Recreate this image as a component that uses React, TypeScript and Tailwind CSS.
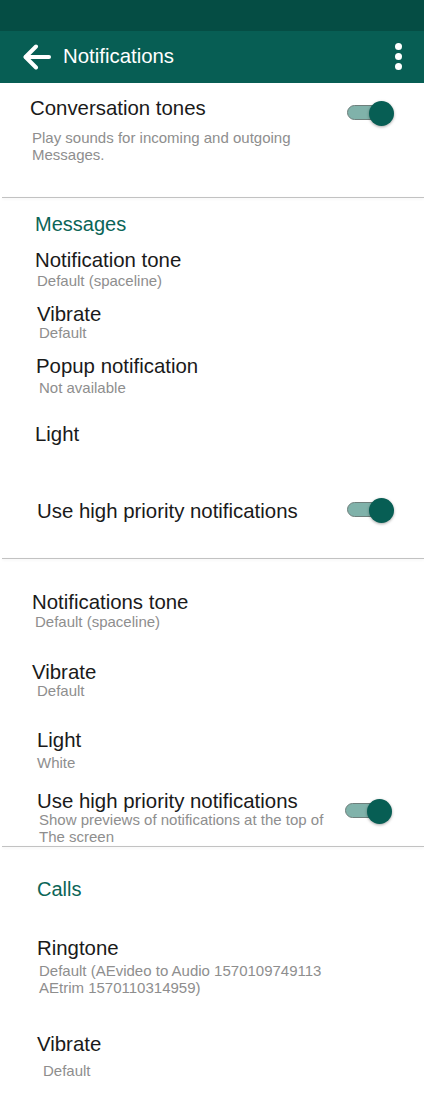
import React from "react";

function Toggle({ className = "" }: { className?: string }) {
  return (
    <div className={"relative w-[47px] h-[25px] shrink-0 " + className}>
      <div className="absolute left-0 top-[4px] w-[38px] h-[15px] rounded-full bg-[#80b2aa] border border-[#6f7f7c]" />
      <div className="absolute right-0 top-0 w-[25px] h-[25px] rounded-full bg-[#075e54] shadow-[0_1px_3px_rgba(0,0,0,0.35)]" />
    </div>
  );
}

function Divider({ className = "" }: { className?: string }) {
  return <div className={"ml-[2px] h-px bg-[#c2c2c2] shadow-[0_1px_3px_rgba(0,0,0,0.08)] " + className} />;
}

const T = "text-[20.4px] leading-[20px] text-[#1a1a1a]";
const S = "text-[15px] leading-[17px] text-[#8e8e8e]";
const H = "text-[20px] leading-[20px] text-[#0b6557]";

export default function App() {
  return (
    <div
      className="w-full min-h-[1103px] bg-white"
      style={{ fontFamily: '"Liberation Sans", Arial, sans-serif' }}
    >
      <div className="h-[31px] bg-[#054d44]" />
      <div className="h-[52px] bg-[#075e54] flex items-center pl-[23px] pr-[22px]">
        <svg width="28" height="26" viewBox="0 0 28 26" fill="none" stroke="white" strokeWidth="4" strokeLinecap="round" strokeLinejoin="round">
          <path d="M26 13H3" />
          <path d="M13 2.5L2.5 13L13 23.5" />
        </svg>
        <div className="ml-[12px] text-[20.4px] leading-[20px] text-white -mt-[2px]">Notifications</div>
        <div className="ml-auto flex flex-col items-center gap-[3px] -mt-[2px]">
          <div className="w-[7px] h-[7px] rounded-full bg-white" />
          <div className="w-[7px] h-[7px] rounded-full bg-white" />
          <div className="w-[7px] h-[7px] rounded-full bg-white" />
        </div>
      </div>

      <div className="flex flex-col">
        <div className="mt-[15px] flex items-start justify-between pl-[30px] pr-[30px] h-[20px]">
          <div className={T}>Conversation tones</div>
          <Toggle className="mt-[3px]" />
        </div>
        <div className={S + " mt-[11px] pl-[32px]"}>
          Play sounds for incoming and outgoing
          <br />
          Messages.
        </div>

        <Divider className="mt-[34px]" />

        <div className={H + " mt-[16px] pl-[35px]"}>Messages</div>
        <div className={T + " mt-[16px] pl-[35px]"}>Notification tone</div>
        <div className={S + " mt-[2px] pl-[37px]"}>Default (spaceline)</div>
        <div className={T + " mt-[15px] pl-[37px]"}>Vibrate</div>
        <div className={S + " mt-0 pl-[39px]"}>Default</div>
        <div className={T + " mt-[15px] pl-[36px]"}>Popup notification</div>
        <div className={S + " mt-[3px] pl-[39px]"}>Not available</div>
        <div className={T + " mt-[28px] pl-[35px]"}>Light</div>
        <div className="mt-[57px] flex items-center justify-between pl-[37px] pr-[30px] h-[20px]">
          <div className={T}>Use high priority notifications</div>
          <Toggle className="-mt-[2px]" />
        </div>

        <Divider className="mt-[37px]" />

        <div className={T + " mt-[33px] pl-[32px]"}>Notifications tone</div>
        <div className={S + " mt-[1px] pl-[35px]"}>Default (spaceline)</div>
        <div className={T + " mt-[32px] pl-[32px]"}>Vibrate</div>
        <div className={S + " mt-0 pl-[37px]"}>Default</div>
        <div className={T + " mt-[31px] pl-[37px]"}>Light</div>
        <div className={S + " mt-[4px] pl-[37px]"}>White</div>
        <div className="mt-[20px] flex items-start justify-between pl-[37px] pr-[32px]">
          <div className="flex flex-col">
            <div className={T}>Use high priority notifications</div>
            <div className={S + " mt-0 pl-[2px]"}>
              Show previews of notifications at the top of
              <br />
              The screen
            </div>
          </div>
          <Toggle className="mt-[8px]" />
        </div>

        <Divider className="mt-[1px]" />

        <div className={H + " mt-[32px] pl-[37px]"}>Calls</div>
        <div className={T + " mt-[39px] pl-[37px]"}>Ringtone</div>
        <div className={S + " mt-[4px] pl-[39px]"}>
          Default (AEvideo to Audio 1570109749113
          <br />
          AEtrim 1570110314959)
        </div>
        <div className={T + " mt-[38px] pl-[37px]"}>Vibrate</div>
        <div className={S + " mt-[8px] pl-[43px]"}>Default</div>
      </div>
    </div>
  );
}
